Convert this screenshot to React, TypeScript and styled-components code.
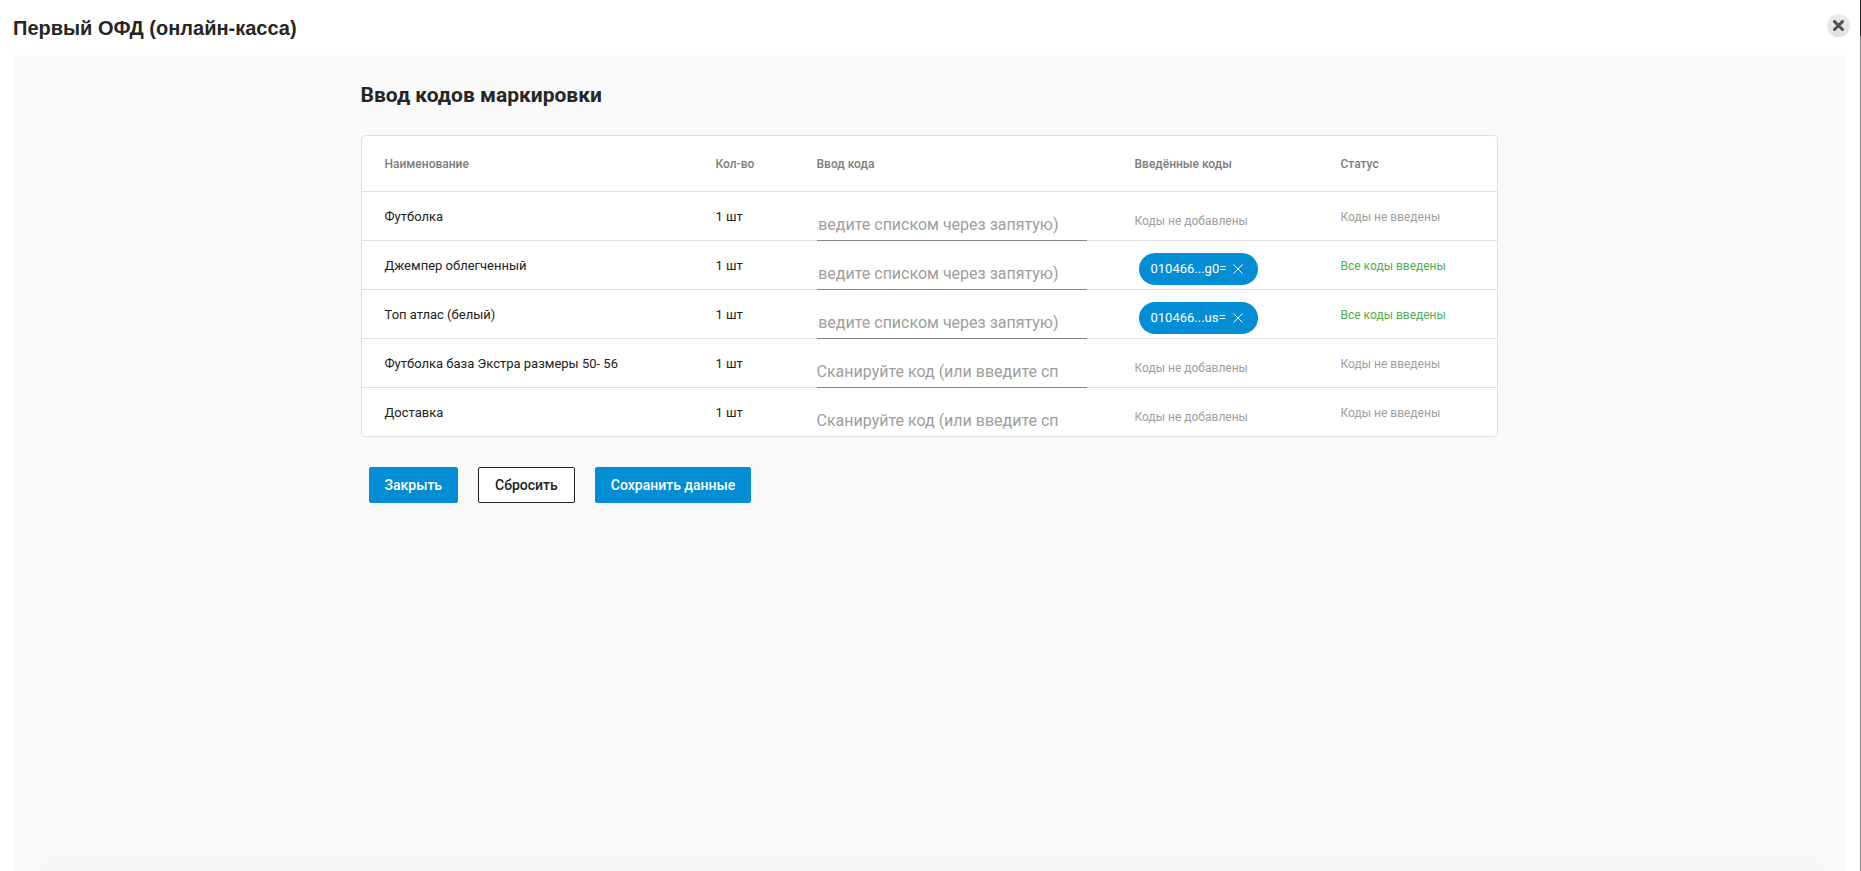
import React, { useState } from "react";
import styled, { createGlobalStyle } from "styled-components";

const GlobalStyle = createGlobalStyle`
  *, *::before, *::after { box-sizing: border-box; }
  body {
    margin: 0;
    background: #fff;
    color: #212121;
    font-family: Roboto, "Liberation Sans", sans-serif;
    -webkit-font-smoothing: antialiased;
  }
`;

const Page = styled.div`
  display: flex;
  flex-direction: column;
  min-height: 100vh;
  padding: 0 15px 0 13px;
  border-right: 1px solid #858585;
  border-image: linear-gradient(#262626 37px, #858585 37px) 1;
`;

const Header = styled.header`
  display: flex;
  align-items: center;
  justify-content: space-between;
  height: 55px;
`;

const DialogTitle = styled.h1`
  margin: 0;
  color: #262626;
  font: bold 20px/24px "Liberation Sans", Arial, sans-serif;
`;

const RoundClose = styled.button`
  display: flex;
  align-items: center;
  justify-content: center;
  width: 23px;
  height: 23px;
  margin: 0 -5px 5px 0;
  padding: 0;
  border: 0;
  border-radius: 50%;
  background: linear-gradient(#ebebeb, #dfe0e0);
  cursor: pointer;
`;

const Panel = styled.main`
  flex: 1;
  background: #fafafa;
`;

const Content = styled.div`
  max-width: 1137px;
  margin: 0 auto;
  padding: 26px 0;
`;

const SectionTitle = styled.h2`
  margin: 0 0 26px;
  color: #262626;
  font-size: 21px;
  font-weight: 700;
  line-height: 28px;
`;

const Card = styled.div`
  overflow: hidden;
  border: 1px solid #e0e0e0;
  border-radius: 4px;
  background: #fff;
`;

const Table = styled.table`
  width: 100%;
  table-layout: fixed;
  border-collapse: separate;
  border-spacing: 0;
  text-align: left;
`;

const Col = styled.col<{ $width?: number }>`
  width: ${(p) => (p.$width ? `${p.$width}px` : "auto")};
`;

const Th = styled.th`
  height: 55px;
  padding: 0;
  color: #7d7d7d;
  font-size: 12px;
  font-weight: 500;
  &:first-child { padding-left: 23px; }
`;

const Td = styled.td`
  height: 49px;
  padding: 0;
  border-top: 1px solid #e0e0e0;
  font-size: 13px;
  line-height: 20px;
  &:first-child { padding-left: 23px; }
`;

const CellText = styled.div<{ $low?: boolean }>`
  padding-top: ${(p) => (p.$low ? 10 : 2)}px;
`;

const Field = styled.div`
  position: relative;
  width: 270px;
  height: 49px;
  margin-bottom: -1px;
  padding: 17px 28px 0 0;
  border-bottom: 1px solid #858585;
`;

const CodeInput = styled.input<{ $atEnd: boolean }>`
  display: block;
  width: 100%;
  height: 30px;
  padding: 0;
  border: 0;
  outline: 0;
  background: transparent;
  font: 16px/24px Roboto, sans-serif;
  direction: ${(p) => (p.$atEnd ? "rtl" : "ltr")};
  &::placeholder { color: #9e9e9e; opacity: 1; }
`;

const Status = styled.span<{ $done?: boolean }>`
  color: ${(p) => (p.$done ? "#4caf50" : "#9e9e9e")};
  font-size: 12px;
`;

const Chip = styled.div`
  display: inline-flex;
  align-items: center;
  gap: 7px;
  height: 32px;
  margin: 8px 0 0 4px;
  padding: 0 15px 0 12px;
  border-radius: 16px;
  background: #028dd5;
  color: #fff;
  font-size: 13px;
  vertical-align: top;
`;

const ChipRemove = styled.button`
  display: flex;
  padding: 0;
  border: 0;
  background: none;
  color: inherit;
  cursor: pointer;
`;

const Actions = styled.div`
  display: flex;
  gap: 20px;
  padding: 30px 8px;
`;

const Button = styled.button<{ $outlined?: boolean }>`
  height: 36px;
  padding: 0 ${(p) => (p.$outlined ? 16 : 15)}px;
  border: 1px solid ${(p) => (p.$outlined ? "#212121" : "#028dd5")};
  border-radius: 2px;
  background: ${(p) => (p.$outlined ? "#fff" : "#028dd5")};
  color: ${(p) => (p.$outlined ? "#212121" : "#fff")};
  font: 500 14px/20px Roboto, sans-serif;
  cursor: pointer;
`;

const BottomShade = styled.div`
  position: fixed;
  right: 40px;
  bottom: -1px;
  left: 40px;
  height: 1px;
  box-shadow: 0 0 28px 4px rgba(0, 0, 0, 0.07);
  pointer-events: none;
`;

type Item = { name: string; code?: string; atEnd: boolean };

const initialItems: Item[] = [
  { name: "Футболка", atEnd: true },
  { name: "Джемпер облегченный", code: "010466...g0=", atEnd: true },
  { name: "Топ атлас (белый)", code: "010466...us=", atEnd: true },
  { name: "Футболка база Экстра размеры 50- 56", atEnd: false },
  { name: "Доставка", atEnd: false },
];

const hint = "Сканируйте код (или введите списком через запятую)";

export default function App() {
  const [items, setItems] = useState(initialItems);
  const removeCode = (index: number) =>
    setItems(items.map((item, i) => (i === index ? { ...item, code: undefined } : item)));

  return (
    <Page>
      <GlobalStyle />
      <Header>
        <DialogTitle>Первый ОФД (онлайн-касса)</DialogTitle>
        <RoundClose aria-label="Закрыть окно">
          <svg width="11" height="11" viewBox="0 0 11 11" stroke="#505050" strokeWidth="3" strokeLinecap="round">
            <path d="M1.5 1.5l8 8M9.5 1.5l-8 8" />
          </svg>
        </RoundClose>
      </Header>
      <Panel>
        <Content>
          <SectionTitle>Ввод кодов маркировки</SectionTitle>
          <Card>
            <Table>
              <colgroup>
                <Col />
                <Col $width={101} />
                <Col $width={318} />
                <Col $width={206} />
                <Col $width={156} />
              </colgroup>
              <thead>
                <tr>
                  <Th>Наименование</Th>
                  <Th>Кол-во</Th>
                  <Th>Ввод кода</Th>
                  <Th>Введённые коды</Th>
                  <Th>Статус</Th>
                </tr>
              </thead>
              <tbody>
                {items.map((item, i) => (
                  <tr key={item.name}>
                    <Td><CellText>{item.name}</CellText></Td>
                    <Td><CellText>1 шт</CellText></Td>
                    <Td>
                      <Field>
                        {/* The trailing mark keeps the closing bracket last when the hint is shown from its end. */}
                        <CodeInput
                          aria-label={`Ввод кода: ${item.name}`}
                          placeholder={item.atEnd ? `${hint}\u200e` : hint}
                          $atEnd={item.atEnd}
                        />
                      </Field>
                    </Td>
                    <Td>
                      {item.code ? (
                        <Chip>
                          {item.code}
                          <ChipRemove aria-label={`Удалить код ${item.code}`} onClick={() => removeCode(i)}>
                            <svg width="10" height="10" viewBox="0 0 10 10" stroke="currentColor" strokeWidth="1">
                              <path d="M.5.5l9 9M9.5.5l-9 9" />
                            </svg>
                          </ChipRemove>
                        </Chip>
                      ) : (
                        <CellText $low><Status>Коды не добавлены</Status></CellText>
                      )}
                    </Td>
                    <Td>
                      <CellText>
                        <Status $done={!!item.code}>{item.code ? "Все коды введены" : "Коды не введены"}</Status>
                      </CellText>
                    </Td>
                  </tr>
                ))}
              </tbody>
            </Table>
          </Card>
          <Actions>
            <Button>Закрыть</Button>
            <Button $outlined onClick={() => setItems(initialItems)}>Сбросить</Button>
            <Button>Сохранить данные</Button>
          </Actions>
        </Content>
      </Panel>
      <BottomShade />
    </Page>
  );
}
